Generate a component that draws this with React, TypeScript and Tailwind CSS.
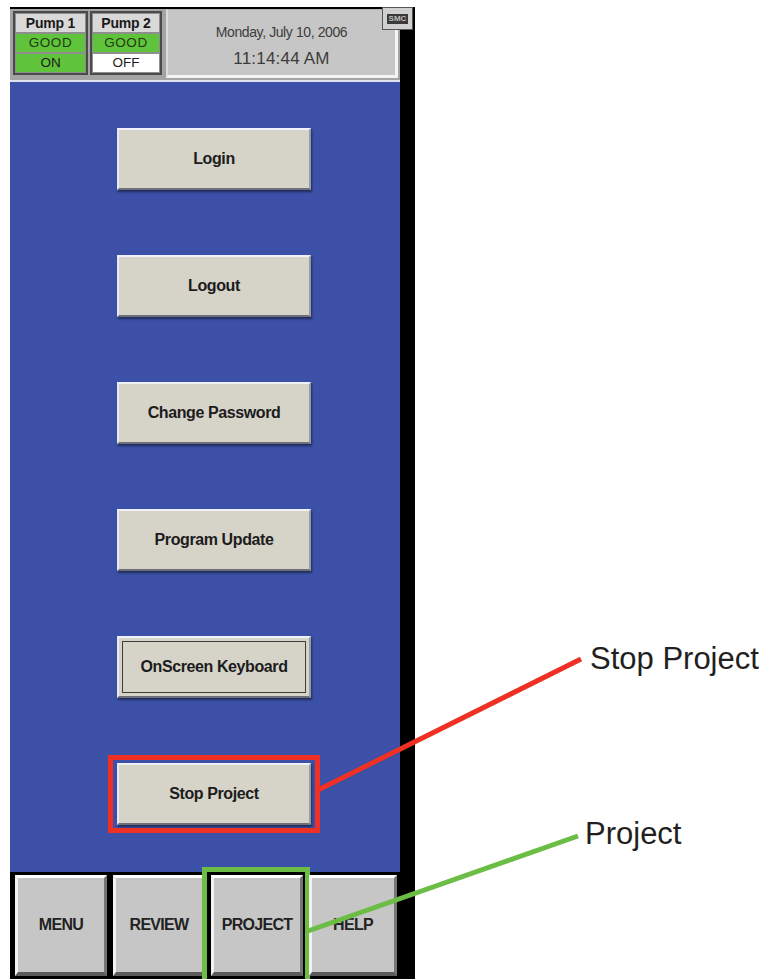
import React from 'react';

// Settings screen of the pump controller, with two callouts on the right
const menuItems = [
  { label: 'Login' },
  { label: 'Logout' },
  { label: 'Change Password' },
  { label: 'Program Update' },
  { label: 'OnScreen Keyboard', focused: true },
  { label: 'Stop Project', marked: true },
];

const navItems = [
  { label: 'MENU', width: 'w-[92px]' },
  { label: 'REVIEW', width: 'w-[92px]' },
  { label: 'PROJECT', width: 'w-[92px]', marked: true },
  { label: 'HELP', width: 'w-[88px]' },
];

const PumpBox = ({ name, state }: { name: string; state: 'ON' | 'OFF' }) => (
  <div className="flex flex-col gap-[2px] w-full h-full border-2 border-[#4a4a4a] bg-[#8e8e8e] p-[1px]">
    <div className="h-[19px] bg-[#d9d9d9] flex items-center justify-center text-[14px] font-bold text-[#1a1a1a] leading-none tracking-[-0.2px]">
      {name}
    </div>
    <div className="h-[19px] bg-[#5fc43c] flex items-center justify-center text-[13.5px] text-[#1f3a12] leading-none tracking-[0.6px]">
      GOOD
    </div>
    <div
      className={`h-[19px] flex items-center justify-center text-[13.5px] text-[#1a1a1a] leading-none ${
        state === 'ON' ? 'bg-[#5fc43c]' : 'bg-white'
      }`}
    >
      {state}
    </div>
  </div>
);

const PanelButton = ({ label, focused, marked }: { label: string; focused?: boolean; marked?: boolean }) => (
  <div className="relative w-[194px] h-[62px]">
    <div className="w-full h-full bg-[#d6d3c9] border-2 border-t-[#eef0fb] border-l-[#e6e8f5] border-r-[#9a9aa4] border-b-[#6f6f7a] shadow-[1px_2px_2px_rgba(0,0,0,0.45)] p-[3px] flex">
      <div
        className={`flex-1 flex items-center justify-center text-[16px] font-bold tracking-[-0.4px] text-[#1c1c1c] ${
          focused ? 'border border-[#3c3c3c]' : ''
        }`}
      >
        {label}
      </div>
    </div>
    {marked && (
      <span className="absolute -left-[9px] -right-[9px] -top-[8px] -bottom-[8px] border-[5px] border-[#ee3124]" />
    )}
  </div>
);

const NavButton = ({ label, width, marked }: { label: string; width: string; marked?: boolean }) => (
  <div className={`relative ${width} h-[101px]`}>
    <div className="w-full h-full bg-[#c6c6c6] border-t-[3px] border-l-[3px] border-r-[3px] border-b-[4px] border-t-white border-l-[#f2f2f2] border-r-[#767676] border-b-[#5c5c5c] flex items-center justify-center text-[16px] font-bold tracking-[-0.7px] text-[#222]">
      {label}
    </div>
    {marked && (
      <span className="absolute -left-[9px] -right-[7px] -top-[8px] -bottom-[12px] border-[5px] border-[#6cbd45]" />
    )}
  </div>
);

export default function App() {
  return (
    <div className="relative w-[768px] h-[979px] overflow-hidden bg-white font-['Liberation_Sans',Arial,sans-serif]">
      <div className="ml-[10px] pt-[7px] w-[405px] h-full flex flex-col">
        <div className="relative flex flex-col bg-black">
          <div className="flex">
            <div className="w-[390px] flex flex-col">
              {/* Status header */}
              <div className="h-[73px] bg-[#a4a4a4] border-t-2 border-black flex items-start">
                <div className="w-[75px] h-[64px] mt-[2px] ml-[3px]">
                  <PumpBox name="Pump 1" state="ON" />
                </div>
                <div className="w-[72px] h-[64px] mt-[2px] ml-[2px]">
                  <PumpBox name="Pump 2" state="OFF" />
                </div>
                <div className="w-[232px] h-[69px] ml-[4px] bg-[#c6c6c6] border-l-2 border-t border-r-[3px] border-b-[3px] border-l-[#dcdcdc] border-t-[#b0b0b0] border-r-[#f4f4f4] border-b-[#f4f4f4] flex flex-col items-center pt-[15px] text-[#3c3c3c]">
                  <div className="text-[14px] leading-none tracking-[-0.4px]">Monday, July 10, 2006</div>
                  <div className="mt-[11px] text-[17px] leading-none tracking-[0.2px]">11:14:44 AM</div>
                </div>
              </div>
              {/* Menu area */}
              <div className="h-[792px] bg-[#3b50a6] border-t-2 border-[#dfe3f0] pl-[107px] pt-[46px] flex flex-col gap-[65px]">
                {menuItems.map((item) => (
                  <PanelButton key={item.label} label={item.label} focused={item.focused} marked={item.marked} />
                ))}
              </div>
            </div>
            <div className="w-[15px] bg-black" />
          </div>
          <div className="absolute left-[372px] top-0 w-[31px] h-[23px] bg-[#d0d0d0] border border-[#555] flex items-center justify-center">
            <div className="px-[2px] bg-[#3a3a3a] text-[8px] font-bold leading-[10px] text-[#bdbdbd]">SMC</div>
          </div>
        </div>
        {/* Bottom navigation */}
        <div className="flex-1 bg-black pl-[5px] pt-[3px] flex gap-[6px] items-start">
          {navItems.map((item) => (
            <NavButton key={item.label} label={item.label} width={item.width} marked={item.marked} />
          ))}
        </div>
      </div>

      {/* Callouts */}
      <svg className="absolute inset-0 pointer-events-none" width="768" height="979">
        <line x1="318" y1="790" x2="581" y2="659" stroke="#ee3124" strokeWidth="5" />
        <line x1="308" y1="931" x2="578" y2="836" stroke="#6cbd45" strokeWidth="5" />
      </svg>
      <div className="absolute left-[590px] top-[643px] text-[31px] leading-[31px] text-[#231f20]">Stop Project</div>
      <div className="absolute left-[585px] top-[818px] text-[31px] leading-[31px] text-[#231f20]">Project</div>
    </div>
  );
}
